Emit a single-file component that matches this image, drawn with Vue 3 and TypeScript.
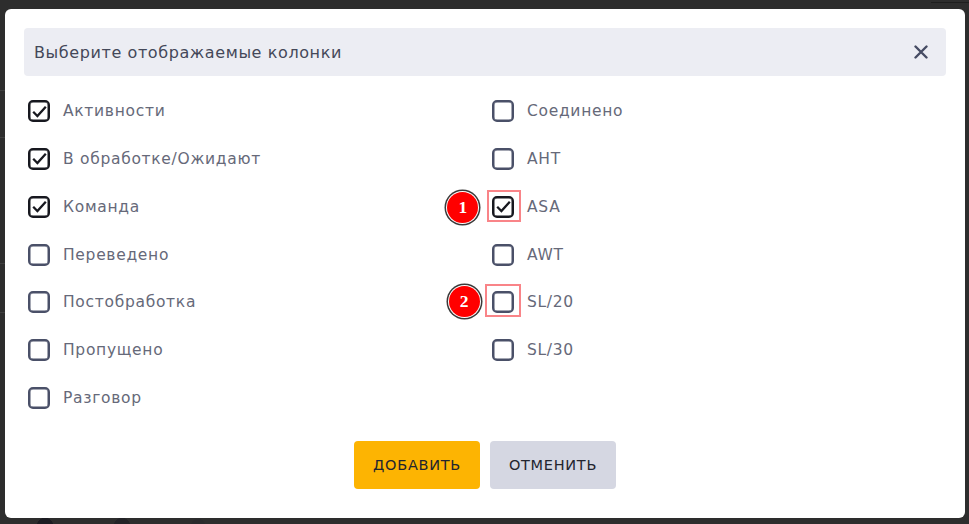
<script setup lang="ts">
interface Col { label: string; checked: boolean; mark?: number }
const left: Col[] = [
  { label: 'Активности', checked: true },
  { label: 'В обработке/Ожидают', checked: true },
  { label: 'Команда', checked: true },
  { label: 'Переведено', checked: false },
  { label: 'Постобработка', checked: false },
  { label: 'Пропущено', checked: false },
  { label: 'Разговор', checked: false },
]
const right: Col[] = [
  { label: 'Соединено', checked: false },
  { label: 'AHT', checked: false },
  { label: 'ASA', checked: true, mark: 1 },
  { label: 'AWT', checked: false },
  { label: 'SL/20', checked: false, mark: 2 },
  { label: 'SL/30', checked: false },
]
const columns = [left, right]
</script>

<template>
  <div class="page">
    <div class="modal">
      <header class="head">
        <span class="title">Выберите отображаемые колонки</span>
        <svg class="close" width="14" height="14" viewBox="0 0 14 14" aria-label="Закрыть">
          <path d="M1.5 1.5 12.5 12.5M12.5 1.5 1.5 12.5" stroke="#464c63" stroke-width="2.4" stroke-linecap="round" fill="none" />
        </svg>
      </header>
      <div class="cols">
        <ul v-for="(col, i) in columns" :key="i" class="col">
          <li v-for="item in col" :key="item.label" class="row">
            <span class="box" :class="{ on: item.checked, ['mark' + item.mark]: item.mark }">
              <svg v-if="item.checked" width="15" height="13" viewBox="0 0 15 13">
                <path d="M1.2 6.8 5.4 11 13.8 1.8" stroke="#17181f" stroke-width="2.3" fill="none" />
              </svg>
              <template v-if="item.mark">
                <i class="frame"></i>
                <b class="badge">{{ item.mark }}</b>
              </template>
            </span>
            <span class="label">{{ item.label }}</span>
          </li>
        </ul>
      </div>
      <footer class="actions">
        <button class="btn add">ДОБАВИТЬ</button>
        <button class="btn cancel">ОТМЕНИТЬ</button>
      </footer>
    </div>
  </div>
</template>

<style>
html, body { margin: 0; background: #2d2d2d; }
</style>

<style scoped>
.page {
  width: 969px;
  height: 524px;
  box-sizing: border-box;
  padding: 9px 4px 6px 5px;
  background-color: #2d2d2d;
  background-repeat: no-repeat;
  background-image:
    linear-gradient(#3f3f3f, #3f3f3f),
    linear-gradient(#3f3f3f, #3f3f3f),
    linear-gradient(#3f3f3f, #3f3f3f),
    linear-gradient(#3f3f3f, #3f3f3f),
    linear-gradient(#1e1e1e, #1e1e1e),
    radial-gradient(circle at 45px 8px, #1c1c22 8px, transparent 8.5px),
    radial-gradient(circle at 122px 8px, #232327 8px, transparent 8.5px),
    radial-gradient(circle at 198px 8px, #2a2a2c 7px, transparent 7.5px);
  background-size: 5px 1px, 5px 1px, 5px 1px, 5px 1px, 38px 1px, 100% 8px, 100% 8px, 100% 8px;
  background-position: 0 90px, 0 137px, 0 263px, 0 312px, 931px 2px, 0 518px, 0 518px, 0 518px;
  font-family: "DejaVu Sans", sans-serif;
  overflow: hidden;
}
.modal {
  height: 509px;
  box-sizing: border-box;
  padding: 19px 19px 0;
  background: #fff;
  border-radius: 6px;
  display: flex;
  flex-direction: column;
}
.head {
  height: 48px;
  flex: none;
  display: flex;
  align-items: center;
  justify-content: space-between;
  padding: 0 18px 0 10px;
  background: #ecedf3;
  border-radius: 4px;
}
.title {
  font-size: 16px;
  letter-spacing: 0.6px;
  color: #444859;
}
.cols {
  display: grid;
  grid-template-columns: 464px 1fr;
  padding-top: 11.3px;
}
.col { list-style: none; margin: 0; padding: 0; }
.row {
  height: 47.8px;
  display: flex;
  align-items: center;
  padding-left: 4px;
}
.box {
  position: relative;
  width: 18px;
  height: 18px;
  flex: none;
  display: flex;
  align-items: center;
  justify-content: center;
  border: 2px solid #4a5068;
  box-shadow: inset 0 0 0 0.5px #4a5068;
  border-radius: 5px;
  margin-right: 13px;
}
.box.on { border-color: #17181f; box-shadow: inset 0 0 0 0.5px #17181f; }
.label {
  font-size: 15.5px;
  letter-spacing: 0.7px;
  color: #666979;
}
.frame {
  position: absolute;
  left: -7px;
  top: -8px;
  width: 30px;
  height: 28px;
  border: 2px solid #f98488;
}
.mark2 .frame { left: -9px; top: -9px; width: 32px; height: 29px; }
.badge {
  position: absolute;
  left: -46.7px;
  top: -6px;
  width: 31px;
  height: 31px;
  display: flex;
  align-items: center;
  justify-content: center;
  border-radius: 50%;
  background: #f00;
  color: #fff;
  font: bold 17.5px "Liberation Serif", serif;
  box-shadow: 0 0 0 1px #fff, 0 0 0 2.5px #3a3a3a;
}
.mark2 .badge { left: -45.3px; top: -7.5px; }
.actions {
  display: flex;
  justify-content: center;
  gap: 10px;
  padding-top: 18.7px;
}
.btn {
  width: 126px;
  height: 48px;
  border: 0;
  border-radius: 4px;
  font: 500 14.5px "DejaVu Sans", sans-serif;
  letter-spacing: 0.7px;
  color: #23252f;
}
.add { background: #fdb402; }
.cancel { background: #d5d7e2; }
</style>
